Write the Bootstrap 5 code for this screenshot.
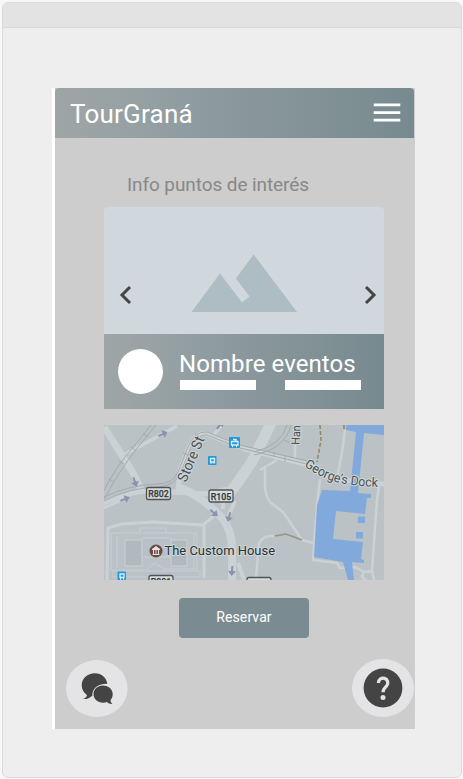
<!DOCTYPE html>
<html lang="es">
<head>
<meta charset="utf-8">
<meta name="viewport" content="width=device-width, initial-scale=1">
<title>TourGraná</title>
<link href="https://cdn.jsdelivr.net/npm/bootstrap@5.3.0/dist/css/bootstrap.min.css" rel="stylesheet">
<style>
body{background:#f8f8f8;font-family:Roboto,"Liberation Sans",sans-serif;overflow:hidden}
svg{display:block}
.frame{margin:2px 1px 0 2px;height:776px;border:1px solid #d9d9d9;border-radius:6px;background:#eee}
.frame-bar{height:25px;background:#e3e3e3;border-bottom:1px solid #d8d8d8;flex:none}
.phone{width:363px;height:641px;margin:60px 0 0 49px;background:#cdcdcd;border-left:3px solid #fff}
.grad{background:linear-gradient(90deg,#9fa5a6 0%,#96a1a3 22%,#8f9ca2 36%,#849397 68%,#778a90 100%);color:#fff}
.topbar{height:50px;width:359px;padding:0 13px 0 15px;border-radius:4px 4px 0 0}
.brand{font-size:26px;line-height:30px;letter-spacing:.22px;padding-top:1px}
.section-title{font-size:19px;line-height:24px;letter-spacing:-.09px;color:#888;margin:35px 0 0 72px}
.content{width:280px;margin:10px 0 0 49px}
.photo{height:127px;background:#d0d7dd;border-radius:4px 4px 0 0}
.caption{height:75px;padding:15px 0 0 14px}
.avatar{width:45px;height:45px;border-radius:50%;background:#fff}
.details{margin-left:17px}
.event{font-size:24px;line-height:30px;letter-spacing:.08px;margin:0 0 1px -1px}
.lines{width:181px}
.line{width:76px;height:10px;background:#fff}
.map{height:155px;margin-top:16px}
.btn.reserve{width:130px;height:40px;background:#7a8c92;color:#fff;font-size:14px;line-height:20px;padding:0 0 2px;letter-spacing:.1px;border:0;border-radius:4px;margin:18px 0 0 124px}
.actions{margin:21px 0 0 11px;width:348px}
</style>
<script src="https://cdn.jsdelivr.net/npm/bootstrap@5.3.0/dist/js/bootstrap.bundle.min.js"></script>
</head>
<body>
<div class="frame d-flex flex-column overflow-hidden">
  <div class="frame-bar"></div>
  <main class="phone d-flex flex-column">
    <header class="topbar grad d-flex align-items-center justify-content-between">
      <div class="brand">TourGraná</div>
      <svg width="28" height="20" viewBox="0 0 28 20" fill="#fff" role="img" aria-label="Menú"><path d="M.7.5h26.600v2.700H.7zM.7 8.200h26.600v2.700H.7zM.7 15.800h26.600v2.700H.7z"/></svg>
    </header>
    <h1 class="section-title fw-normal">Info puntos de interés</h1>
    <section class="content">
      <div class="photo">
        <svg width="280" height="127" viewBox="0 0 280 127">
          <path d="M87.500 105L116 66.500 138 95.500 145.500 89.500 132 71.500 149.600 47.500 193 105z" fill="#aebcc3"/>
          <path d="M26 80L18 88 26 96M262 80L270 88 262 96" fill="none" stroke="#444" stroke-width="3"/>
        </svg>
      </div>
      <div class="caption grad d-flex">
        <div class="avatar flex-shrink-0"></div>
        <div class="details">
          <div class="event text-nowrap">Nombre eventos</div>
          <div class="lines d-flex justify-content-between"><span class="line"></span><span class="line"></span></div>
        </div>
      </div>
      <div class="map">
        <svg width="280" height="155" viewBox="0 0 280 155" font-family="Roboto, sans-serif">
          <defs>
            <path id="dock" d="M200 41Q221 56 241 59T279 62"/>
            <g id="arr"><path d="M-5 0H1" stroke="#8992ae" stroke-width="2"/><path d="M0-4L5 0 0 4z" fill="#8992ae"/></g>
          </defs>
          <rect width="280" height="155" fill="#bac2c5"/>
          <g fill="#b0b9be" stroke="#c3cacf" stroke-width="1.500">
            <path d="M7 108H36V103H62V108H93V144H60L51 138 42 145H7z" fill="#b9c2c9"/>
            <path d="M21 115H38V141H21zM67 115H83V141H67z"/>
            <path d="M38 113H67V132H38z" fill="#b7c0c6"/>
            <path d="M13 111V142M90 109V142M38 108H66M9 146H96V152H9z" fill="none"/>
          </g>
          <g fill="none" stroke="#cbd2d5" stroke-linejoin="round">
            <path d="M0 2L19 32 28 46 38 66" stroke-width="7"/>
            <path d="M18 31L73 1M118 0L108 12" stroke-width="3.500"/>
            <path d="M-2 79Q28 65 48 66T106 69L123 64M74 66L76 45 86 20Q92 7 103 9L141 24 205 40 217 49Q240 57 281 59" stroke-width="5"/>
            <path d="M122 73Q140 50 150 33L167-2" stroke-width="11"/>
            <path d="M74 62Q97 70 119 94 128 106 128 124V156" stroke-width="8"/>
            <path d="M119 72V84M131 76L123 94M134 138L140 155" stroke-width="4"/>
            <path d="M0 83L24 72M3 155L4 103 18 99 49 97 99 100 110 91M100 101V153" stroke-width="3"/>
            <path d="M156 45L173 35M161 43V62Q162 73 167 78L179 87 198 115 209 118M191 33V0M170 111Q158 110 155 119L152 152" stroke-width="2.500"/>
            <path d="M241 5L238 27 233 53M216 54L213 80 209 135 233 138 236 143 251 142 260 147 268 146 273 75 275 60M260 147L258 152 263 156M268 146L270 155" stroke-width="2.500"/>
          </g>
          <g fill="none" stroke="#a3abad" stroke-width="1">
            <path d="M-4 73Q11 42 31 20L47 0M-2 78Q14 47 34 22L52 0M0 72Q25 60 53 59 69 59 74 47L84 22Q90 6 103 7L136 20 203 36M0 76Q27 62 55 62 72 60 77 47L87 22Q93 9 103 10L136 23 203 39M150 30Q181 24 187 0M150 27Q178 20 183 0"/>
            <path d="M5 54l5 3M15 36l5 3M27 22l5 4M39 8l5 4M79 28l6 2M91 8l4 5M170 27v5M180 15l6 3M181 31v6"/>
          </g>
          <g fill="#82a9dc">
            <path d="M242 0H280V10L260 8 254 68 267 69V73H263L261 89 232 86 229 114 259 117 257 134 260 135V138L248 137 250 155H244L239 137 210 132 213 80 218 65 246 66 252 7 242 5z"/>
            <path d="M254 91.500h7v6.500h-7zM252 107h7v6.500h-7z"/>
          </g>
          <path d="M216 0L217 15 213 37M240 0V5" stroke="#8f8c6d" stroke-width="1.600" stroke-dasharray="4 2" fill="none"/>
          <path d="M171 111L182 109 198 115" stroke="#95957f" stroke-width="1.500" fill="none"/>
          <use href="#arr" transform="translate(59 9) rotate(-25)"/>
          <use href="#arr" transform="translate(31 57) rotate(70)"/>
          <use href="#arr" transform="translate(21 74) rotate(-22)"/>
          <use href="#arr" transform="translate(110 88) rotate(40)"/>
          <use href="#arr" transform="translate(125 92) rotate(105)"/>
          <use href="#arr" transform="translate(128 146) rotate(95)"/>
          <use href="#arr" transform="translate(116 0) rotate(-50)"/>
          <g fill="#2199df">
            <rect x="125" y="12" width="11" height="11" rx="1"/>
            <rect x="104" y="31" width="8.500" height="9" rx="1"/>
            <rect x="13.500" y="146.500" width="8.500" height="9" rx="1"/>
          </g>
          <path d="M127.500 16.500h6.500v3.500h-6.500zM129 14.500h3v2M128 21.500h1M132 21.500h1M106.500 33.500h4v3.500h-4zM106.500 38.300h1M109.500 38.300h1M16 149h4v3.500h-4zM16 154h1M19 154h1" fill="none" stroke="#e2edf3" stroke-width="1.300"/>
          <g fill="#d7dcdd" stroke="#4d5356" stroke-width="1.300">
            <rect x="42.500" y="62.500" width="24" height="12" rx="2"/>
            <rect x="105" y="65" width="24" height="12" rx="2"/>
            <rect x="45" y="150.500" width="24" height="12" rx="2"/>
            <rect x="143" y="152.500" width="24" height="12" rx="2"/>
          </g>
          <g fill="#33383a" font-size="9.500" font-weight="500" stroke="#33383a" stroke-width=".25" text-anchor="middle">
            <text x="54.500" y="72" textLength="20.500" lengthAdjust="spacingAndGlyphs">R802</text>
            <text x="117" y="74.500" textLength="20.500" lengthAdjust="spacingAndGlyphs">R105</text>
            <text x="57" y="160" textLength="20.500" lengthAdjust="spacingAndGlyphs">R801</text>
          </g>
          <circle cx="52" cy="126" r="6.500" fill="#694a45"/>
          <path d="M48 124.500L52 121.500 56 124.500zM48.500 129.500h7M49.500 125v4M52 125v4M54.500 125v4" fill="#e6e3e1" stroke="#e6e3e1" stroke-width="1"/>
          <g fill="#2c3133" stroke="#d0d7d9" stroke-width="2" paint-order="stroke" stroke-linejoin="round">
            <text x="60.500" y="130" font-size="13.500" textLength="110.500" lengthAdjust="spacingAndGlyphs">The Custom House</text>
            <g fill="#4a5154">
              <text transform="translate(82 58) rotate(-67)" font-size="14.500" textLength="48" lengthAdjust="spacingAndGlyphs">Store St</text>
              <text transform="translate(195.500 20) rotate(-87)" font-size="12" textLength="19.500" lengthAdjust="spacingAndGlyphs">Han</text>
              <text font-size="13"><textPath href="#dock" textLength="78" lengthAdjust="spacingAndGlyphs">George’s Dock</textPath></text>
            </g>
          </g>
        </svg>
      </div>
    </section>
    <button type="button" class="btn reserve">Reservar</button>
    <div class="actions d-flex justify-content-between">
      <svg width="62" height="58" viewBox="0 0 62 58" role="img" aria-label="Chat">
        <ellipse cx="30.800" cy="29.500" rx="30.800" ry="28.500" fill="#e4e4e6"/>
        <path d="M29 14.300C21.500 14.300 15.700 19.500 15.700 26.300c0 4.200 2 7.500 5.200 9.700 0 1.800-1.200 3.200-4 3.900 3.500.5 6.500-.4 8.400-2.700h1C26 29.700 31.500 24.600 41.300 24.800 40.500 18.800 35.500 14.300 29 14.300z" fill="#444"/>
        <path d="M37 26.500c-5.400 0-9.500 3.700-9.500 8.500 0 4.900 4.200 8.700 9.600 8.700 1.400 0 2.700-.2 3.800-.6 1.600 1.500 3.400 2.100 5.500 1.800-1.100-.9-1.800-2.200-1.900-3.900 1.500-1.600 2.200-3.700 2.200-6C46.700 30.200 42.500 26.500 37 26.500z" fill="#444"/>
      </svg>
      <svg width="62" height="58" viewBox="0 0 62 58" role="img" aria-label="Ayuda">
        <ellipse cx="31" cy="29" rx="31" ry="29" fill="#e4e4e6"/>
        <circle cx="31" cy="29" r="19.400" fill="#444"/>
        <path d="M26.400 24A4.700 4.700 0 1 1 34.700 26.800C32.500 29 31 30 31 33.200" fill="none" stroke="#e4e4e6" stroke-width="3.300"/>
        <circle cx="31" cy="38.500" r="2.500" fill="#e4e4e6"/>
      </svg>
    </div>
  </main>
</div>
</body>
</html>
